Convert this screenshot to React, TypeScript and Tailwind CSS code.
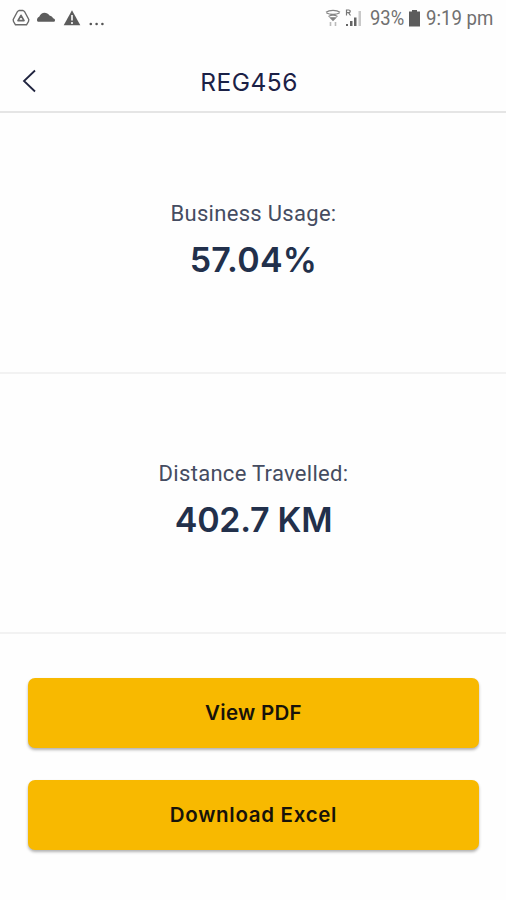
import React from "react";

function StatusBar() {
  return (
    <div className="flex h-9 items-center justify-between pl-3 pr-3 font-[Roboto,sans-serif] text-[20px] leading-none text-[#707070]">
      <div className="flex items-center">
        <svg className="h-[18px] w-[18px]" viewBox="0 0 18 18" fill="none" stroke="#6a6a6a">
          <path d="M7 1.500h4l1.500 1 4.300 8-.3 2-2 3.300H3.500l-2-3.300-.3-2 4.300-8z" strokeWidth="1.400" strokeLinejoin="round" />
          <path d="M9 6.300l3 5.300H6z" strokeWidth="1.700" strokeLinejoin="round" />
        </svg>
        <svg className="ml-[7px] h-[18px] w-[18px]" viewBox="0 0 18 18" fill="#5c5c5c">
          <path d="M1.500 12.800C.5 12.800 0 12 0 11c0-1.500.8-2.600 2.200-3.200C3.500 5.300 5.200 3.800 7.500 3.800c2 0 3.700 1 5 2.700 1.800.4 3 1.300 3.500 2.700 1.300.4 2 1 2 2 0 1-.6 1.600-1.700 1.600z" />
        </svg>
        <svg className="ml-2 h-[18px] w-[18px]" viewBox="0 0 18 18">
          <path d="M9 1.300l8.300 15H.7z" fill="#5c5c5c" />
          <path d="M9 6v5.500M9 13v2" stroke="#fff" strokeWidth="1.600" />
        </svg>
        <svg className="ml-2 h-[18px] w-[16px]" viewBox="0 0 16 18" fill="#555">
          <circle cx="1.800" cy="15" r="1.300" />
          <circle cx="7.600" cy="15" r="1.300" />
          <circle cx="13.400" cy="15" r="1.300" />
        </svg>
      </div>
      <div className="flex items-center">
        <svg className="h-[18px] w-[16px]" viewBox="0 0 16 18" fill="none" stroke="#858585" strokeWidth="1.300">
          <path d="M1 3.300C4.500.700 11.500.700 15 3.300M1.500 4C5 5.800 11 5.800 14.500 4M3.500 7.500c2.500-1.500 6.500-1.500 9 0" />
          <path d="M5.500 8.800L8 11.300l2.500-2.500z" fill="#777" />
          <path d="M5.500 13v4M10.500 13v4" stroke="#bbb" strokeWidth="1.600" />
        </svg>
        <svg className="ml-1 h-[18px] w-[17px]" viewBox="0 0 17 18">
          <path d="M1.500 6.500V1h2.200c2 0 2 2.700 0 2.700H1.500M3.500 3.700l2 2.800" fill="none" stroke="#777" strokeWidth="1.200" />
          <path d="M1 17v-2h2v2zM5 17v-5h2.500v5zM9 17V8.500h2.500V17z" fill="#656565" />
          <path d="M13.500 17V2h2.500v15z" fill="#c9c9c9" />
        </svg>
        <span className="ml-[8px] w-[35px] origin-left scale-x-[0.92] whitespace-nowrap">93%</span>
        <svg className="ml-[4px] h-[18px] w-[11px]" viewBox="0 0 11 18" fill="#5c5c5c">
          <path d="M3 1h5v1.500h3v15H0v-15h3z" />
        </svg>
        <span className="ml-[6px] w-[68px] origin-left scale-x-[0.93] whitespace-nowrap">9:19 pm</span>
      </div>
    </div>
  );
}

function Stat({ label, value, className, valueClass }: { label: string; value: string; className: string; valueClass: string }) {
  return (
    <section className={`flex flex-col items-center border-b-2 border-[#f2f2f2] ${className}`}>
      <p className="pl-px font-[Roboto,sans-serif] text-[22px] leading-[28px] tracking-[0.3px] text-[#454c61]">{label}</p>
      <p className={`mt-[11px] pl-px font-[Inter,sans-serif] text-[34px] font-semibold leading-[42px] text-[#22304b] ${valueClass}`}>{value}</p>
    </section>
  );
}

function ActionButton({ children, className }: { children: React.ReactNode; className: string }) {
  return (
    <button className={`h-[70px] w-full rounded-[7px] bg-[#f8b900] font-[Inter,sans-serif] font-semibold text-[#17130a] shadow-[0_2px_3px_rgba(0,0,0,0.3)] ${className}`}>
      {children}
    </button>
  );
}

export default function App() {
  return (
    <main className="h-[900px] w-full overflow-hidden bg-[#fefefe]">
      <StatusBar />
      <header className="grid h-[77px] grid-cols-[50px_1fr_60px] items-center border-b-2 border-[#e5e5e5] pt-[14px]">
        <button className="pl-[22px]" aria-label="Back">
          <svg className="h-6 w-4" viewBox="0 0 16 24" fill="none" stroke="#20243f" strokeWidth="1.800">
            <path d="M13 1.500L2 12l11 10.500" />
          </svg>
        </button>
        <h1 className="pl-[2px] pt-[2px] text-center font-[Inter,sans-serif] text-[24.500px] leading-8 tracking-[0.5px] text-[#1b2146]">REG456</h1>
      </header>
      <Stat label="Business Usage:" value="57.04%" className="h-[261px] pt-[87px]" valueClass="tracking-[0.3px]" />
      <Stat label="Distance Travelled:" value="402.7 KM" className="h-[260px] pt-[86px]" valueClass="tracking-[-0.3px]" />
      <div className="flex flex-col gap-8 pl-7 pr-[27px] pt-[44px]">
        <ActionButton className="text-[20.500px] tracking-[0.300px]">View PDF</ActionButton>
        <ActionButton className="text-[20.500px] tracking-[0.700px]">Download Excel</ActionButton>
      </div>
    </main>
  );
}
